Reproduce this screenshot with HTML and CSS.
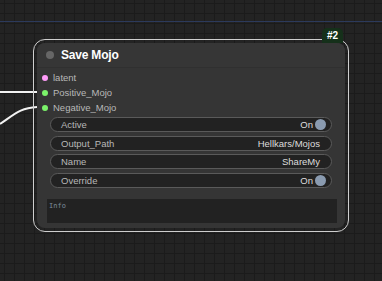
FILE: index.html
```html
<!DOCTYPE html>
<html lang="en">
<head>
  <meta charset="UTF-8">
  <title>Save Mojo</title>
  <link rel="stylesheet" href="styles.css">
</head>
<body>
  <div class="canvas">
    <div class="group-line"></div>

    <!-- links coming in from the left -->
    <svg class="wires" width="40" height="140" viewBox="0 0 40 140">
      <path d="M0 92 L37 92" />
      <path d="M0 124 C15 114, 20 108, 37 107" />
    </svg>

    <div class="node">
      <span class="badge">#2</span>

      <div class="node-title">
        <span class="collapse-dot"></span>
        <span class="title-text">Save Mojo</span>
      </div>

      <div class="slots">
        <div class="slot"><span class="dot pink"></span>latent</div>
        <div class="slot"><span class="dot green"></span>Positive_Mojo</div>
        <div class="slot"><span class="dot green"></span>Negative_Mojo</div>
      </div>

      <div class="widgets">
        <div class="widget">
          <span class="label">Active</span>
          <span class="value">On <span class="toggle"></span></span>
        </div>
        <div class="widget">
          <span class="label">Output_Path</span>
          <span class="value">Hellkars/Mojos</span>
        </div>
        <div class="widget">
          <span class="label">Name</span>
          <span class="value">ShareMy</span>
        </div>
        <div class="widget">
          <span class="label">Override</span>
          <span class="value">On <span class="toggle"></span></span>
        </div>
      </div>

      <div class="info">Info</div>
    </div>
  </div>
</body>
</html>
```

FILE: styles.css
```css
:root {
  --canvas-bg: #232323;
  --grid-line: #1b1b1b;
  --node-bg: #353535;
  --title-bg: #363636;
  --widget-bg: #222;
  --widget-border: #5a5a5a;
  --text-color: #ddd;
  --label-color: #b8b8b8;
}

body {
  margin: 0;
  padding: 0;
  font-family: "Liberation Sans", Arial, sans-serif;
  background: var(--canvas-bg);
}

.canvas {
  position: relative;
  width: 382px;
  height: 281px;
  overflow: hidden;
  background-color: var(--canvas-bg);
  background-image:
    linear-gradient(var(--grid-line) 1px, transparent 1px),
    linear-gradient(90deg, var(--grid-line) 1px, transparent 1px);
  background-size: 10px 10px;
  background-position: 4px 3px;
}

.group-line {
  position: absolute;
  left: 0;
  right: 0;
  top: 21px;
  height: 1px;
  background: #2c3a5c;
}

.wires {
  position: absolute;
  left: 0;
  top: 0;
}

.wires path {
  fill: none;
  stroke: #f2f2f2;
  stroke-width: 2;
}

.node {
  position: absolute;
  left: 37px;
  top: 43px;
  width: 308px;
  height: 185px;
  background: var(--node-bg);
  border-radius: 8px;
  display: flex;
  flex-direction: column;
}

/* selection outline */
.node::before {
  content: "";
  position: absolute;
  inset: -4px;
  border: 1px solid #cfcfcf;
  border-radius: 12px;
  pointer-events: none;
}

.badge {
  position: absolute;
  right: 2px;
  top: -15px;
  width: 21px;
  height: 15px;
  background: #15301a;
  color: #fff;
  font-size: 10px;
  font-weight: bold;
  line-height: 15px;
  text-align: center;
  border-radius: 5px 5px 0 0;
}

.node-title {
  height: 24px;
  display: flex;
  align-items: center;
  gap: 7px;
  padding-left: 9px;
  background: var(--title-bg);
  border-bottom: 1px solid #303030;
  border-radius: 8px 8px 0 0;
}

.collapse-dot {
  width: 8px;
  height: 8px;
  border-radius: 50%;
  background: #666;
}

.title-text {
  color: #fff;
  font-size: 12px;
  font-weight: bold;
  letter-spacing: -0.2px;
}

.slots {
  padding-top: 2px;
}

.slot {
  height: 15px;
  display: flex;
  align-items: center;
  gap: 5px;
  padding-left: 5px;
  color: var(--label-color);
  font-size: 9.5px;
}

.dot {
  width: 6px;
  height: 6px;
  border-radius: 50%;
}

.dot.pink { background: #ff9cf9; }
.dot.green { background: #7bf26a; }

.widgets {
  display: flex;
  flex-direction: column;
  gap: 3.5px;
  margin: 2px 13px 0;
}

.widget {
  height: 13px;
  display: flex;
  justify-content: space-between;
  align-items: center;
  padding: 0 11px 0 10px;
  background: var(--widget-bg);
  border: 1px solid var(--widget-border);
  border-radius: 8px;
  font-size: 9.5px;
}

.widget .label {
  color: var(--label-color);
}

.widget .value {
  display: flex;
  align-items: center;
  gap: 2px;
  color: var(--text-color);
}

.toggle {
  width: 11px;
  height: 11px;
  margin-right: -6px;
  border-radius: 50%;
  background: #8a9bb0;
}

.info {
  margin: 11px 8px 0 10px;
  height: 24px;
  padding: 3px 2px;
  box-sizing: border-box;
  background: var(--widget-bg);
  color: #7a8a98;
  font-family: "DejaVu Sans Mono", monospace;
  font-size: 7px;
}
```
